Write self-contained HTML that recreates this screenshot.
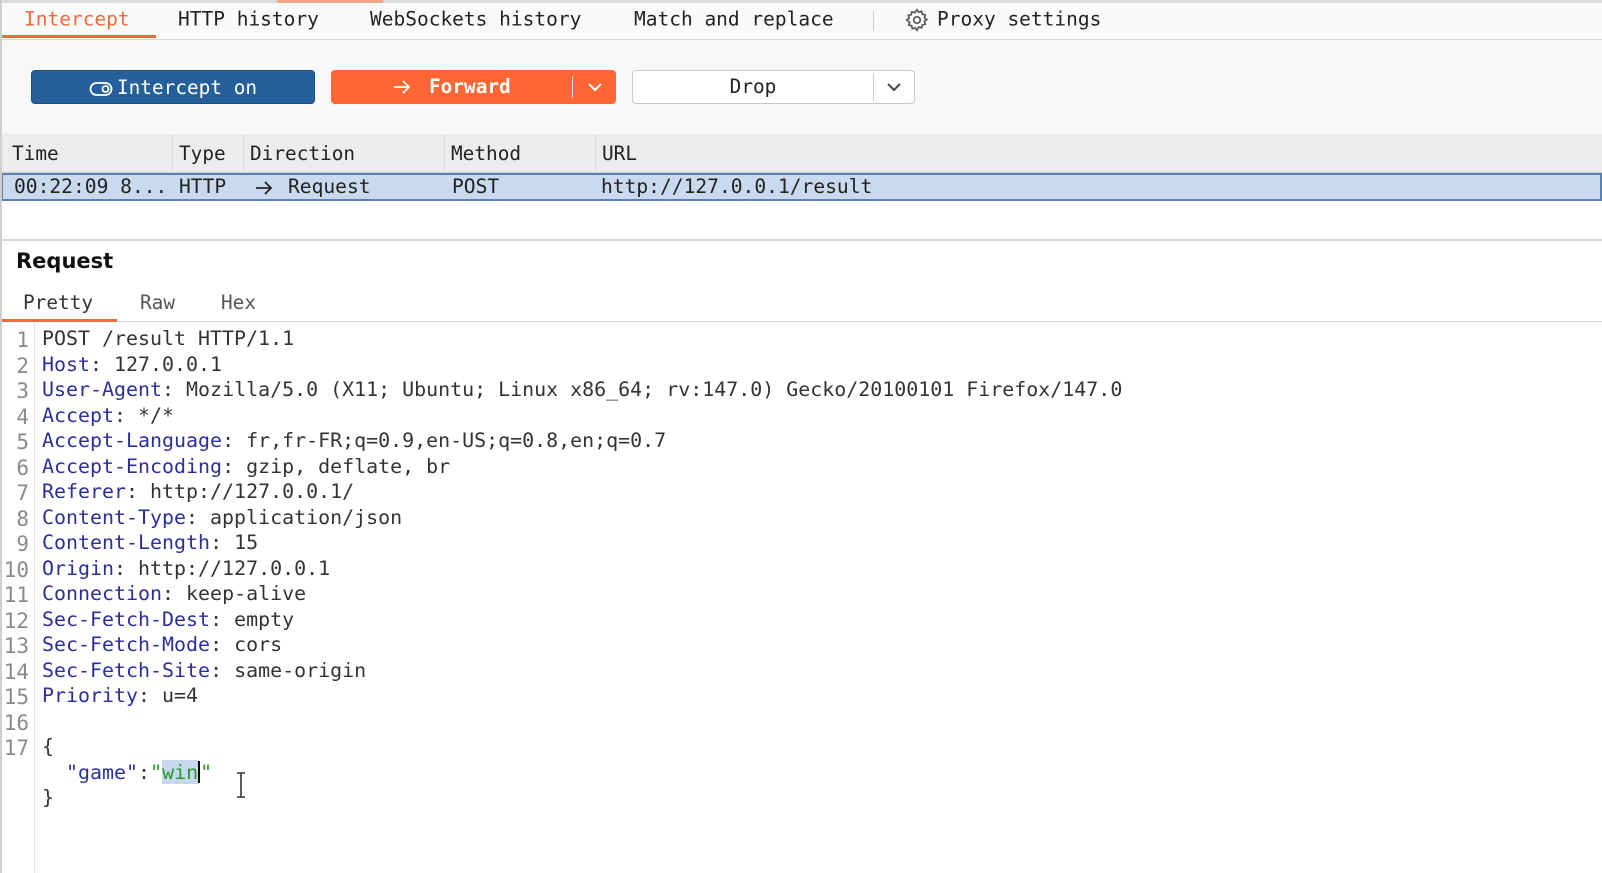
<!DOCTYPE html>
<html><head><meta charset="utf-8"><style>
*{margin:0;padding:0;box-sizing:border-box}
body{width:1602px;height:873px;background:#fff;font-family:"DejaVu Sans Mono","Liberation Mono",monospace;color:#222;position:relative;overflow:hidden}
.abs{position:absolute;white-space:pre}
.top{position:absolute;left:0;top:0;width:1602px;height:3px;background:#dcdcdc}
.tabbar{position:absolute;left:0;top:3px;width:1602px;height:37px;background:#fafafa;border-bottom:1px solid #d8d8d8}
.tab{position:absolute;top:19px;transform:translateY(-50%);font-size:19.5px;color:#222}
.tb{position:absolute;left:0;top:40px;width:1602px;height:94px;background:#f8f8f8}
.btn{position:absolute;top:70px;height:34px;border-radius:4px;font-size:19.4px;line-height:34px;text-align:center}
.hdr{position:absolute;left:0;top:134px;width:1602px;height:39px;background:#ececec;border-bottom:1px solid #d0d0d0}
.hc{position:absolute;top:0;height:39px;line-height:40px;font-size:19.4px;border-left:1px solid #dadada;padding-left:6px}
.row{position:absolute;left:1px;top:173px;width:1601px;height:28px;background:#c9d9ee;border:2px solid #5a82b4;font-size:19.6px}
.row .c{position:absolute;top:0;line-height:24px;white-space:pre}
.code{font-size:19.95px}
.ln{position:absolute;width:29px;text-align:right;color:#8a8a8a;font-size:21px}
.k{color:#2b2f9a}
</style></head><body>
<div class="top"></div>
<div style="position:absolute;left:0;top:0;width:2px;height:873px;background:#cfcfcf;z-index:5"></div>
<div class="tabbar"></div>
<div style="position:absolute;left:277px;top:0;width:106px;height:3px;background:#f4a488"></div>
<div class="tab" style="left:24px;color:#f26a3a">Intercept</div>
<div style="position:absolute;left:0;top:35px;width:156px;height:3px;background:#f26a3a"></div>
<div class="tab" style="left:178px">HTTP history</div>
<div class="tab" style="left:370px">WebSockets history</div>
<div class="tab" style="left:634px">Match and replace</div>
<div style="position:absolute;left:873px;top:11px;width:1px;height:20px;background:#ccc"></div>
<svg style="position:absolute;left:904px;top:7px" width="26" height="26" viewBox="0 0 24 24" fill="none" stroke="#555" stroke-width="1.5"><circle cx="12" cy="12" r="3"/><path d="M12 2.5l1.6 2.3 2.7-.8.6 2.7 2.7.6-.8 2.7 2.3 1.6-2.3 1.6.8 2.7-2.7.6-.6 2.7-2.7-.8L12 21.5l-1.6-2.3-2.7.8-.6-2.7-2.7-.6.8-2.7L2.5 12l2.3-1.6-.8-2.7 2.7-.6.6-2.7 2.7.8z"/></svg>
<div class="tab" style="left:937px">Proxy settings</div>
<div class="tb"></div>
<div class="btn" style="left:31px;width:284px;background:#25609a;color:#fff;border:1px solid #1d4e80"><svg style="vertical-align:-4px;margin-right:4px" width="24" height="18" viewBox="0 0 24 18" fill="none" stroke="#fff" stroke-width="1.8"><rect x="1.5" y="3" width="21" height="12" rx="6"/><circle cx="16.5" cy="9" r="3"/></svg>Intercept on</div>
<div class="btn" style="left:331px;width:285px;background:#ff6633;color:#fff;font-weight:bold">
<svg style="position:absolute;left:62px;top:9px" width="18" height="16" viewBox="0 0 18 16" fill="none" stroke="#fff" stroke-width="1.8"><path d="M1 8h15M10 2l6 6-6 6"/></svg>
<span style="position:absolute;left:98px">Forward</span><span style="position:absolute;left:241px;top:6px;width:1px;height:22px;background:#d9d9d9"></span><svg style="position:absolute;left:255px;top:11px" width="18" height="12" viewBox="0 0 18 12" fill="none" stroke="#fff" stroke-width="2"><path d="M3 3l6 6 6-6"/></svg></div>
<div class="btn" style="left:632px;width:283px;background:#fff;border:1px solid #c8c8c8;color:#222;line-height:32px"><span style="position:absolute;left:0;width:240px;text-align:center">Drop</span><span style="position:absolute;left:240px;top:2px;width:1px;height:28px;background:#ccc"></span><svg style="position:absolute;left:252px;top:10px" width="18" height="12" viewBox="0 0 18 12" fill="none" stroke="#444" stroke-width="2"><path d="M3 3l6 6 6-6"/></svg></div>
<div class="hdr">
<div class="hc" style="left:6px;border:none">Time</div>
<div class="hc" style="left:172px">Type</div>
<div class="hc" style="left:243px">Direction</div>
<div class="hc" style="left:444px">Method</div>
<div class="hc" style="left:595px">URL</div>
</div>
<div class="row"><span class="c" style="left:11px">00:22:09 8...</span><span class="c" style="left:176px">HTTP</span>
<svg style="position:absolute;left:252px;top:5px" width="18" height="16" viewBox="0 0 18 16" fill="none" stroke="#222" stroke-width="1.8"><path d="M1 8h15M10 2l6 6-6 6"/></svg>
<span class="c" style="left:285px">Request</span><span class="c" style="left:449px">POST</span><span class="c" style="left:598px">http://127.0.0.1/result</span></div>
<div style="position:absolute;left:0;top:239px;width:1602px;height:2px;background:#d4d4d4"></div>
<div class="abs" style="left:16px;top:249px;font-family:'DejaVu Sans',sans-serif;font-weight:bold;font-size:21px;color:#111">Request</div>
<div class="abs" style="left:23px;top:291px;font-size:19.4px;color:#333">Pretty</div>
<div class="abs" style="left:140px;top:291px;font-size:19.4px;color:#555">Raw</div>
<div class="abs" style="left:221px;top:291px;font-size:19.4px;color:#555">Hex</div>
<div style="position:absolute;left:0;top:319px;width:117px;height:3px;background:#f26a3a"></div>
<div style="position:absolute;left:117px;top:321px;width:1485px;height:1px;background:#d4d4d4"></div>
<div style="position:absolute;left:34px;top:322px;width:1px;height:551px;background:#e2e2e2"></div>
<div class="code" style="position:absolute;left:0;top:326px;line-height:25.5px">
<div style="position:absolute;left:0;top:2px;line-height:25.5px">
<div class="ln" style="position:relative">1</div><div class="ln" style="position:relative">2</div><div class="ln" style="position:relative">3</div><div class="ln" style="position:relative">4</div><div class="ln" style="position:relative">5</div><div class="ln" style="position:relative">6</div><div class="ln" style="position:relative">7</div><div class="ln" style="position:relative">8</div><div class="ln" style="position:relative">9</div><div class="ln" style="position:relative">10</div><div class="ln" style="position:relative">11</div><div class="ln" style="position:relative">12</div><div class="ln" style="position:relative">13</div><div class="ln" style="position:relative">14</div><div class="ln" style="position:relative">15</div><div class="ln" style="position:relative">16</div><div class="ln" style="position:relative">17</div>
</div>
<div style="position:absolute;left:42px;top:0;white-space:pre;color:#333">POST /result HTTP/1.1
<span class="k">Host</span>: 127.0.0.1
<span class="k">User-Agent</span>: Mozilla/5.0 (X11; Ubuntu; Linux x86_64; rv:147.0) Gecko/20100101 Firefox/147.0
<span class="k">Accept</span>: */*
<span class="k">Accept-Language</span>: fr,fr-FR;q=0.9,en-US;q=0.8,en;q=0.7
<span class="k">Accept-Encoding</span>: gzip, deflate, br
<span class="k">Referer</span>: http://127.0.0.1/
<span class="k">Content-Type</span>: application/json
<span class="k">Content-Length</span>: 15
<span class="k">Origin</span>: http://127.0.0.1
<span class="k">Connection</span>: keep-alive
<span class="k">Sec-Fetch-Dest</span>: empty
<span class="k">Sec-Fetch-Mode</span>: cors
<span class="k">Sec-Fetch-Site</span>: same-origin
<span class="k">Priority</span>: u=4

{
  <span class="k">"game"</span>:<span style="color:#2a9a2a">"<span style="background:#c6d8ee">win</span></span><span style="display:inline-block;width:2px;height:22px;background:#000;vertical-align:-4px"></span><span style="color:#2a9a2a">"</span>
}</div>
</div>
<svg style="position:absolute;left:236px;top:772px" width="10" height="26" viewBox="0 0 10 26" fill="none" stroke="#333" stroke-width="1.6"><path d="M1 1h8M5 1v24M1 25h8"/></svg>
</body></html>
